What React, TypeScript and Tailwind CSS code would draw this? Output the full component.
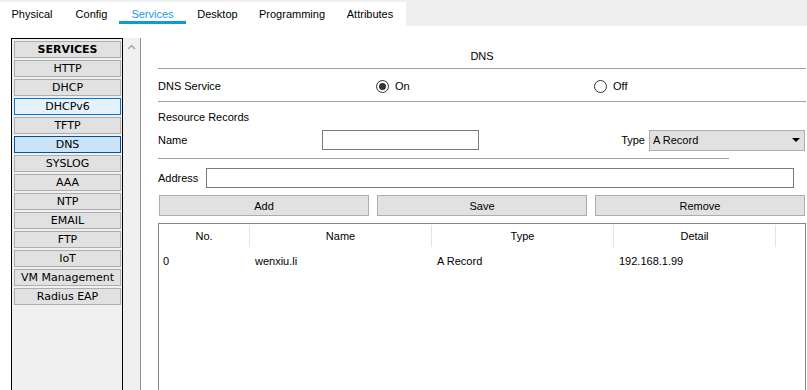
import React from "react";

const services = [
  { name: "SERVICES", kind: "title" },
  { name: "HTTP", kind: "normal" },
  { name: "DHCP", kind: "normal" },
  { name: "DHCPv6", kind: "hover" },
  { name: "TFTP", kind: "normal" },
  { name: "DNS", kind: "selected" },
  { name: "SYSLOG", kind: "normal" },
  { name: "AAA", kind: "normal" },
  { name: "NTP", kind: "normal" },
  { name: "EMAIL", kind: "normal" },
  { name: "FTP", kind: "normal" },
  { name: "IoT", kind: "normal" },
  { name: "VM Management", kind: "normal" },
  { name: "Radius EAP", kind: "normal" },
];

function ServiceButton({ name, kind }: { name: string; kind: string }) {
  let cls = "bg-[#e1e1e1] border-[#adadad]";
  if (kind === "hover") cls = "bg-[#e5f1fb] border-[#0078d7]";
  if (kind === "selected") cls = "bg-[#cce4f7] border-[#005499]";
  return (
    <div
      className={`h-[17px] w-[107px] border flex items-center justify-center text-[11px] leading-none text-black ${cls} ${
        kind === "title" ? "font-bold" : ""
      }`}
      style={{ fontFamily: '"DejaVu Sans", sans-serif' }}
    >
      {name}
    </div>
  );
}

function Radio({ checked }: { checked: boolean }) {
  return (
    <div className="w-[13px] h-[13px] rounded-full border border-[#333333] bg-white flex items-center justify-center">
      {checked && <div className="w-[7px] h-[7px] rounded-full bg-[#333333]" />}
    </div>
  );
}

export default function App() {
  const tabs = [
    { t: "Physical", w: "w-[64px]" },
    { t: "Config", w: "w-[55px]" },
    { t: "Services", w: "w-[67px]", active: true },
    { t: "Desktop", w: "w-[63px]" },
    { t: "Programming", w: "w-[86px]" },
    { t: "Attributes", w: "w-[70px]" },
  ];
  return (
    <div
      className="w-[807px] h-[390px] bg-white overflow-hidden text-[11px] text-black"
      style={{ fontFamily: '"Liberation Sans", Arial, sans-serif' }}
    >
      {/* Tab bar */}
      <div className="h-[26px] bg-[#efefef] flex">
        <div className="mt-[2px] h-[24px] w-[406px] bg-white flex">
          {tabs.map((tab) => (
            <div key={tab.t} className={`${tab.w} h-[24px] flex flex-col items-center`}>
              <div
                className={`mt-[6px] h-[12px] flex items-center leading-[12px] ${
                  tab.active ? "text-[#1a9bd7]" : "text-black"
                }`}
              >
                {tab.t}
              </div>
              {tab.active && <div className="mt-[1px] w-full h-[3px] bg-[#0e9bd4]" />}
            </div>
          ))}
        </div>
      </div>

      <div className="flex">
        {/* Left services panel */}
        <div className="ml-[11px] mt-[12px] flex h-[360px]">
          <div className="w-[112px] h-full border border-black bg-[#f0f0f0] pt-[2px] pl-[2px] flex flex-col gap-[2px]">
            {services.map((s) => (
              <ServiceButton key={s.name} name={s.name} kind={s.kind} />
            ))}
          </div>
          <div className="w-[18px] h-full bg-[#f0f0f0] border-r border-[#8a8f99] flex justify-center pt-[6px]">
            <svg width="9" height="6" viewBox="0 0 9 6">
              <path d="M1 5 L4.5 1.5 L8 5" stroke="#a6a6a6" strokeWidth="1.5" fill="none" />
            </svg>
          </div>
        </div>

        {/* Right content */}
        <div className="ml-[17px] w-[648px] flex flex-col">
          <div className="h-[42px] flex items-end justify-center pb-[5px] leading-[14px]">DNS</div>
          <div className="h-px bg-[#a0a0a0]" />
          <div className="h-[32px] pt-[2px] flex items-center">
            <div className="w-[218px]">DNS Service</div>
            <div className="w-[218px] flex items-center gap-[6px]">
              <Radio checked />
              <span>On</span>
            </div>
            <div className="flex items-center gap-[6px]">
              <Radio checked={false} />
              <span>Off</span>
            </div>
          </div>
          <div className="h-px bg-[#a0a0a0]" />
          <div className="h-[26px] pt-[8px] leading-[14px]">Resource Records</div>
          <div className="h-[24px] flex items-center">
            <div className="w-[164px]">Name</div>
            <div className="w-[157px] h-[20px] border border-[#7a7a7a] bg-white" />
            <div className="flex-1" />
            <div className="mr-[4px]">Type</div>
            <div className="w-[156px] h-[21px] mr-[1px] bg-[#e1e1e1] border border-[#adadad] flex items-center pl-[3px] pr-[4px]">
              <span className="flex-1">A Record</span>
              <svg width="8" height="4" viewBox="0 0 8 4">
                <path d="M0 0 L8 0 L4 4 Z" fill="#000" />
              </svg>
            </div>
          </div>
          <div className="mt-[6px] h-px w-[571px] bg-[#a0a0a0]" />
          <div className="mt-[9px] h-[20px] flex items-center">
            <div className="w-[48px]">Address</div>
            <div className="w-[588px] h-[20px] border border-[#7a7a7a] bg-white" />
          </div>
          <div className="mt-[7px] ml-px flex gap-[8px]">
            {["Add", "Save", "Remove"].map((b) => (
              <div
                key={b}
                className="w-[210px] h-[21px] pt-px bg-[#e1e1e1] border border-[#adadad] flex items-center justify-center"
              >
                {b}
              </div>
            ))}
          </div>
          <div className="mt-[7px] w-[648px] h-[200px] border border-[#828790] bg-white">
            <div className="h-[23px] pt-px flex">
              <div className="w-[91px] border-r border-[#e5e5e5] flex items-center justify-center">No.</div>
              <div className="w-[182px] border-r border-[#e5e5e5] flex items-center justify-center">Name</div>
              <div className="w-[182px] border-r border-[#e5e5e5] flex items-center justify-center">Type</div>
              <div className="w-[162px] border-r border-[#e5e5e5] flex items-center justify-center">Detail</div>
            </div>
            <div className="h-[28px] flex items-center">
              <div className="w-[92px] pl-[4px]">0</div>
              <div className="w-[182px] pl-[4px]">wenxiu.li</div>
              <div className="w-[182px] pl-[4px]">A Record</div>
              <div className="w-[162px] pl-[4px]">192.168.1.99</div>
            </div>
          </div>
        </div>
      </div>
    </div>
  );
}
